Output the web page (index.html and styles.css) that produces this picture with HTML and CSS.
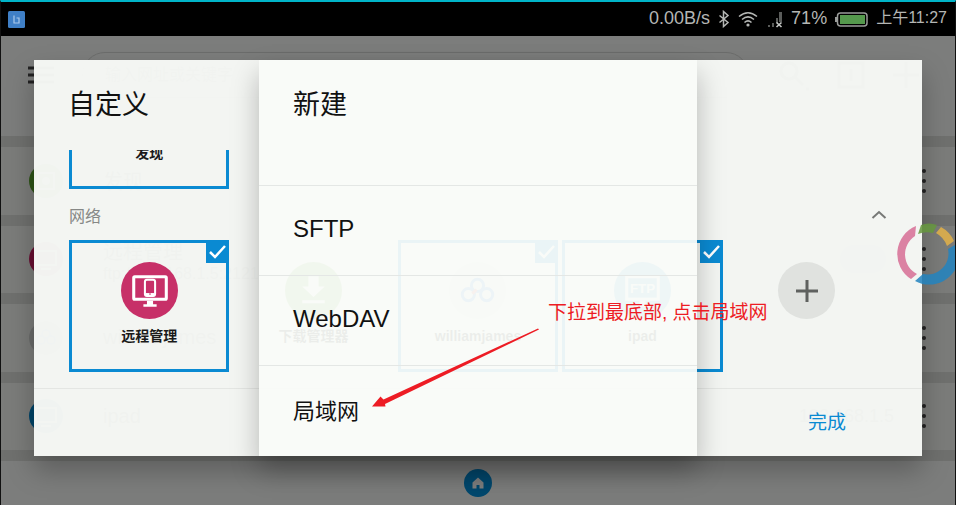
FILE: index.html
```html
<!DOCTYPE html>
<html lang="zh-CN">
<head>
<meta charset="utf-8">
<meta name="viewport" content="width=device-width, initial-scale=1">
<title>自定义</title>
<link rel="stylesheet" href="styles.css">
</head>
<body>
<div class="screen">
  <header class="status">
    <svg class="app-badge" viewBox="0 0 17 17" aria-hidden="true"><rect width="17" height="17" rx="1.5" fill="#3f7fc6"/><path d="M6 4.500v7.500h5V7H8.500" fill="none" stroke="#a9c8ea" stroke-width="1.200"/></svg>
    <span class="speed">0.00B/s</span>
    <svg width="12" height="18" viewBox="0 0 12 18" aria-hidden="true"><path d="M1.500 5.500l8.500 7-4.500 4V1.500l4.500 4-8.500 7" fill="none" stroke="#b4b6b4" stroke-width="1.500"/></svg>
    <svg class="wifi" width="20" height="16" viewBox="0 0 20 16" aria-hidden="true"><g fill="none" stroke="#b4b6b4" stroke-width="1.500"><path d="M1 5.500Q10-2 19 5.500"/><path d="M4 8.500Q10 3.300 16 8.500"/><path d="M6.500 11.500Q10 8.300 13.500 11.500"/></g><circle cx="10" cy="14" r="1.600" fill="#b4b6b4"/></svg>
    <svg class="signal" width="15" height="17" viewBox="0 0 15 17" aria-hidden="true"><path d="M0 14h2v2H0zM4 12h2v4H4zM8 7h2v5H8zM11 1h3v10h-3z" fill="#5a5c5a"/><path d="M8.500 11.500l5 4.500M13.500 11.500l-5 4.500" stroke="#c8cac8" stroke-width="1.600"/></svg>
    <span>71%</span>
    <svg class="battery" width="33" height="15" viewBox="0 0 33 15" aria-hidden="true"><rect x="2.500" y="1" width="29.500" height="13" rx="3" fill="none" stroke="#9a9c9a" stroke-width="1.500"/><path d="M1 5v5" stroke="#9a9c9a" stroke-width="2"/><rect x="5" y="3" width="25" height="9" fill="#55994d"/></svg>
    <time>上午11:27</time>
  </header>

  <main class="page">
    <div class="toolbar">
      <button class="icon-btn" aria-label="菜单"><svg width="26" height="18" viewBox="0 0 26 18"><path d="M0 2h26M0 9h26M0 16h26" stroke="#444" stroke-width="3"/></svg></button>
      <input class="address" type="text" aria-label="网址" placeholder="输入网址或关键字">
      <button class="icon-btn" aria-label="搜索"><svg width="32" height="32" viewBox="0 0 32 32" fill="none" stroke="#555" stroke-width="3"><circle cx="12" cy="12" r="8"/><path d="M18 18l8 8M29 30h3"/></svg></button>
      <button class="icon-btn" aria-label="窗口"><svg width="28" height="28" viewBox="0 0 28 28" fill="none" stroke="#555" stroke-width="3"><rect x="2" y="2" width="24" height="24"/><path d="M14 8v12"/></svg></button>
      <button class="icon-btn" aria-label="添加"><svg width="26" height="26" viewBox="0 0 26 26" stroke="#555" stroke-width="3"><path d="M0 13h26M13 0v26"/></svg></button>
    </div>
    <ul class="rows">
      <li class="row"><svg class="row-icon" viewBox="0 0 34 34"><circle cx="17" cy="17" r="17" fill="#5aa62c"/><rect x="9" y="9" width="16" height="16" fill="none" stroke="#fff" stroke-width="2"/><circle cx="17" cy="17" r="4" fill="#fff"/></svg><span class="row-name">发现</span><span class="dots"></span></li>
      <li class="row"><svg class="row-icon" viewBox="0 0 34 34"><circle cx="17" cy="17" r="17" fill="#d01c63"/><path d="M7 9h20v14H7zM12 27h10" fill="none" stroke="#fff" stroke-width="2"/></svg><span class="row-name">远程管理<small>ftp://192.168.1.5:2121</small></span><span class="toggle"></span><span class="dots"></span></li>
      <li class="row"><svg class="row-icon" viewBox="0 0 34 34"><circle cx="17" cy="17" r="17" fill="#d5d7d5"/><g fill="none" stroke="#3f8ae0" stroke-width="2"><circle cx="17" cy="13" r="4"/><circle cx="12" cy="19" r="4"/><circle cx="22" cy="19" r="4"/></g></svg><span class="row-name">williamjames</span><span class="dots"></span></li>
      <li class="row"><svg class="row-icon" viewBox="0 0 34 34"><circle cx="17" cy="17" r="17" fill="#0088d1"/><path d="M7 9h20v14H7zM12 27h10" fill="none" stroke="#fff" stroke-width="2"/></svg><span class="row-name">ipad</span><span class="address-note">192.168.1.5</span><span class="dots"></span></li>
    </ul>
    <nav class="bottom-bar">
      <button class="home" aria-label="主页"><svg width="12" height="12" viewBox="0 0 12 12"><path d="M6 0.500l5.500 5V11.500H7.500V8h-3v3.500H.5v-6z" fill="#fff"/></svg></button>
    </nav>
  </main>

  <div class="overlay">
    <section class="dialog customize" role="dialog" aria-labelledby="customize-title">
      <h1 id="customize-title" class="title">自定义</h1>
      <div class="tiles-area">
        <div class="tiles">
          <label class="tile checked"><input type="checkbox" checked>
            <svg class="tile-icon" viewBox="0 0 56 56"><circle cx="28" cy="28" r="28" fill="#5aa62c"/></svg>
            <span>发现</span></label>
        </div>
        <div class="section-head"><h2>网络</h2>
          <button class="icon-btn" aria-label="收起"><svg width="16" height="10" viewBox="0 0 16 10"><path d="M1.500 8L8 2l6.500 6" fill="none" stroke="#777977" stroke-width="2"/></svg></button>
        </div>
        <div class="tiles">
          <label class="tile checked"><input type="checkbox" checked>
            <svg class="check" viewBox="0 0 22 22"><path d="M4 11l5 5L19 5" fill="none" stroke="#fff" stroke-width="2.500"/></svg>
            <svg class="tile-icon" viewBox="0 0 56 56"><circle cx="28" cy="28" r="28" fill="#c73068"/><rect x="12.500" y="14.500" width="32" height="22" rx="1" fill="none" stroke="#fff" stroke-width="3"/><path d="M25.500 38h6v3.500H35V44H22v-2.500h3.500z" fill="#fff"/><rect x="23.500" y="17.500" width="10" height="16" rx="2" fill="#c73068" stroke="#fff" stroke-width="2"/><path d="M24 30.500h9v3h-9z" fill="#fff"/><circle cx="28.500" cy="31.500" r=".8" fill="#c73068"/></svg>
            <span>远程管理</span></label>
          <label class="tile"><input type="checkbox">
            <svg class="tile-icon" viewBox="0 0 56 56"><circle cx="28" cy="28" r="28" fill="#7fb95a"/><path d="M23 14h10v10h6L28 34.500 17 24h6zM17 37.500h22v3H17z" fill="#fff"/></svg>
            <span>下载管理器</span></label>
          <label class="tile checked"><input type="checkbox" checked>
            <svg class="check" viewBox="0 0 22 22"><path d="M4 11l5 5L19 5" fill="none" stroke="#fff" stroke-width="2.500"/></svg>
            <svg class="tile-icon" viewBox="0 0 56 56"><circle cx="28" cy="28" r="28" fill="#eceeec"/><g fill="none" stroke="#3f8ae0" stroke-width="3"><circle cx="28" cy="23" r="6"/><circle cx="19" cy="32" r="6"/><circle cx="37" cy="32" r="6"/></g><path d="M23 31l4-4" stroke="#e05050" stroke-width="3"/></svg>
            <span>williamjames</span></label>
          <label class="tile checked"><input type="checkbox" checked>
            <svg class="check" viewBox="0 0 22 22"><path d="M4 11l5 5L19 5" fill="none" stroke="#fff" stroke-width="2.500"/></svg>
            <svg class="tile-icon" viewBox="0 0 56 56"><circle cx="28" cy="28" r="28" fill="#45a5dc"/><rect x="12.500" y="14.500" width="31" height="22" fill="none" stroke="#fff" stroke-width="3"/><path d="M25 38h6v4h4v2H21v-2h4z" fill="#fff"/><text x="28" y="30" class="ftp">FTP</text></svg>
            <span>ipad</span></label>
          <div class="tile"><button class="add" aria-label="添加"><svg width="22" height="22" viewBox="0 0 22 22"><path d="M0 11h22M11 0v22" stroke="#5f615f" stroke-width="3"/></svg></button></div>
        </div>
      </div>
      <footer class="actions"><button class="done">完成</button></footer>
    </section>

    <section class="dialog create" role="dialog" aria-labelledby="create-title">
      <h1 id="create-title" class="title">新建</h1>
      <ul class="options">
        <li><button class="option">SFTP</button></li>
        <li><button class="option">WebDAV</button></li>
        <li><button class="option cjk">局域网</button></li>
      </ul>
    </section>
  </div>

  <svg class="ring" viewBox="0 0 62 62" aria-hidden="true">
    <path d="M19 3A30 30 0 0 0 14 56L20 51A22 22 0 0 1 18 13z" fill="#d76e96"/>
    <path d="M21 11L24 2Q32-1 40 2L36 10Q28 8 21 11z" fill="#66983e"/>
    <path d="M44 4L39 10A24 24 0 0 1 50 23L57 18A30 30 0 0 0 44 4z" fill="#e3b248"/>
    <path d="M58 22L51 26A21 21 0 0 1 26 51L18 58A30 30 0 0 0 62 35V22z" fill="#2284c0"/>
  </svg>

  <p class="note">下拉到最底部, 点击局域网</p>
  <svg class="arrow" viewBox="0 0 168 80" aria-hidden="true"><path d="M0 78.500L8.500 68.500 11.500 71.500 166 0.500 167 1.500 13 76 13.500 78.500z" fill="#ed1c24"/></svg>
</div>
</body>
</html>
```
FILE: styles.css
```css
* {
  box-sizing: border-box;
}

body {
  margin: 0;
  font-family: "Liberation Sans", "Noto Sans CJK SC", sans-serif;
  color: #1a1a1a;
}

h1, h2, p, ul {
  margin: 0;
  padding: 0;
  font-weight: 400;
}

ul {
  list-style: none;
}

button {
  padding: 0;
  border: 0;
  background: none;
  font: inherit;
  color: inherit;
}

svg {
  display: block;
  flex: none;
}

.screen {
  position: relative;
  display: flex;
  flex-direction: column;
  min-height: 100vh;
  overflow: hidden;
  border-top: 2px solid #00b4c8;
  border-left: 1px solid #111;
  border-right: 1px solid #111;
}

/* Status bar */

.status {
  display: flex;
  align-items: center;
  gap: 8px;
  height: 34px;
  padding: 0 8px 0 7px;
  background: #000;
  color: #b4b6b4;
  font-size: 18px;
  line-height: 32px;
}

.status span,
.status time {
  height: 34px;
}

.status time {
  font-size: 16px;
}

.app-badge {
  width: 17px;
  height: 17px;
}

.speed {
  margin-left: auto;
}

.signal {
  margin-left: 2px;
}

/* Page under the dialogs */

.page {
  display: flex;
  flex: 1;
  flex-direction: column;
  background: #dee0dd;
}

.toolbar {
  display: flex;
  align-items: flex-start;
  gap: 28px;
  height: 100px;
  padding: 16px 36px 0 27px;
  background: #f9fbf8;
}

.toolbar .icon-btn {
  display: flex;
  align-items: center;
  height: 46px;
}

.address {
  flex: 1;
  height: 46px;
  padding: 0 22px;
  border: 1px solid #d8dad8;
  border-radius: 23px;
  background: none;
  font: inherit;
  font-size: 16px;
}

.rows {
  display: grid;
  flex: 1;
  grid-auto-rows: 1fr;
  gap: 11px;
  padding: 11px 0;
}

.row {
  display: flex;
  align-items: center;
  padding: 0 29px 0 28px;
  background: #f6f8f5;
}

.row-icon {
  width: 34px;
  height: 34px;
  margin-right: 40px;
}

.row-name {
  flex: 1;
  font-size: 20px;
}

.row-name small {
  display: block;
  font-size: 16px;
}

.address-note {
  margin-right: 28px;
  font-size: 18px;
}

.toggle {
  width: 46px;
  height: 28px;
  margin-right: 36px;
  border-radius: 14px;
  background: #9cc8e4;
}

.dots {
  width: 4px;
  height: 4px;
  border-radius: 50%;
  background: #444;
  box-shadow: 0 -10px #444, 0 10px #444;
}

.bottom-bar {
  display: flex;
  align-items: center;
  justify-content: center;
  height: 44px;
  background: #f9fbf8;
}

.home {
  display: grid;
  place-items: center;
  width: 28px;
  height: 28px;
  border-radius: 50%;
  background: #0090dc;
}

/* Dialogs */

.overlay {
  position: absolute;
  inset: 34px 0 0;
  display: grid;
  padding: 24px 33px 49px;
  background: rgba(0, 0, 0, 0.5);
}

.dialog {
  display: flex;
  flex-direction: column;
  grid-area: 1 / 1;
  min-height: 0;
  isolation: isolate;
  box-shadow: 0 14px 26px rgba(0, 0, 0, 0.26);
}

.customize {
  background: rgba(246, 248, 245, 0.975);
}

.create {
  justify-self: center;
  width: 438px;
  max-width: 100%;
  background: rgba(249, 251, 248, 0.94);
}

.title {
  height: 90px;
  padding: 0 34px;
  font-size: 27px;
  line-height: 90px;
  color: #111;
}

.tiles-area {
  display: flex;
  flex: 1;
  flex-direction: column;
  justify-content: flex-end;
  min-height: 0;
  overflow: hidden;
  padding: 0 35px 16px;
}

.tiles {
  display: grid;
  flex: none;
  grid-template-columns: repeat(5, 1fr);
  gap: 4px;
}

.tile {
  position: relative;
  display: flex;
  flex-direction: column;
  align-items: center;
  gap: 7px;
  height: 132px;
  padding-top: 19px;
  border: 3px solid transparent;
  font-size: 14px;
  font-weight: 700;
  line-height: 20px;
}

.tile.checked {
  border-color: #0a8ad2;
}

.tile input {
  position: absolute;
  top: -3px;
  right: -3px;
  width: 23px;
  height: 23px;
  margin: 0;
  appearance: none;
}

.tile input:checked {
  background: #0a8ad2;
}

.check {
  position: absolute;
  top: -2px;
  right: -2px;
  width: 22px;
  height: 22px;
}

.tile-icon {
  width: 57px;
  height: 57px;
}

.ftp {
  fill: #fff;
  font-size: 13px;
  font-weight: 700;
  text-anchor: middle;
}

.add {
  display: grid;
  place-items: center;
  width: 57px;
  height: 57px;
  border-radius: 50%;
  background: #e0e2df;
}

.section-head {
  display: flex;
  flex: none;
  align-items: center;
  justify-content: space-between;
  height: 51px;
  color: #868886;
}

.section-head h2 {
  font-size: 16px;
}

.actions {
  display: flex;
  align-items: center;
  justify-content: flex-end;
  height: 68px;
  padding: 0 76px 4px;
  border-top: 1px solid #e4e6e3;
}

.done {
  color: #0a8ad2;
  font-size: 19px;
}

.options {
  display: grid;
  flex: 1;
  grid-auto-rows: 90px;
  align-content: end;
  padding-bottom: 1px;
}

.options li {
  border-top: 1px solid #e4e7e5;
}

.option {
  width: 100%;
  height: 100%;
  padding: 0 34px 4px;
  font-size: 24px;
  text-align: left;
  color: #111;
}

.option.cjk {
  font-size: 22px;
}

/* Floating ring and callout */

.ring {
  position: absolute;
  top: 221px;
  left: calc(100% - 58px);
  width: 62px;
  height: 62px;
  opacity: 0.85;
}

.note {
  position: absolute;
  top: 297px;
  left: 547px;
  color: #ed1c24;
  font-size: 19px;
  line-height: 28px;
  white-space: nowrap;
}

.arrow {
  position: absolute;
  top: 326px;
  left: 371px;
  width: 168px;
  height: 80px;
}
```
